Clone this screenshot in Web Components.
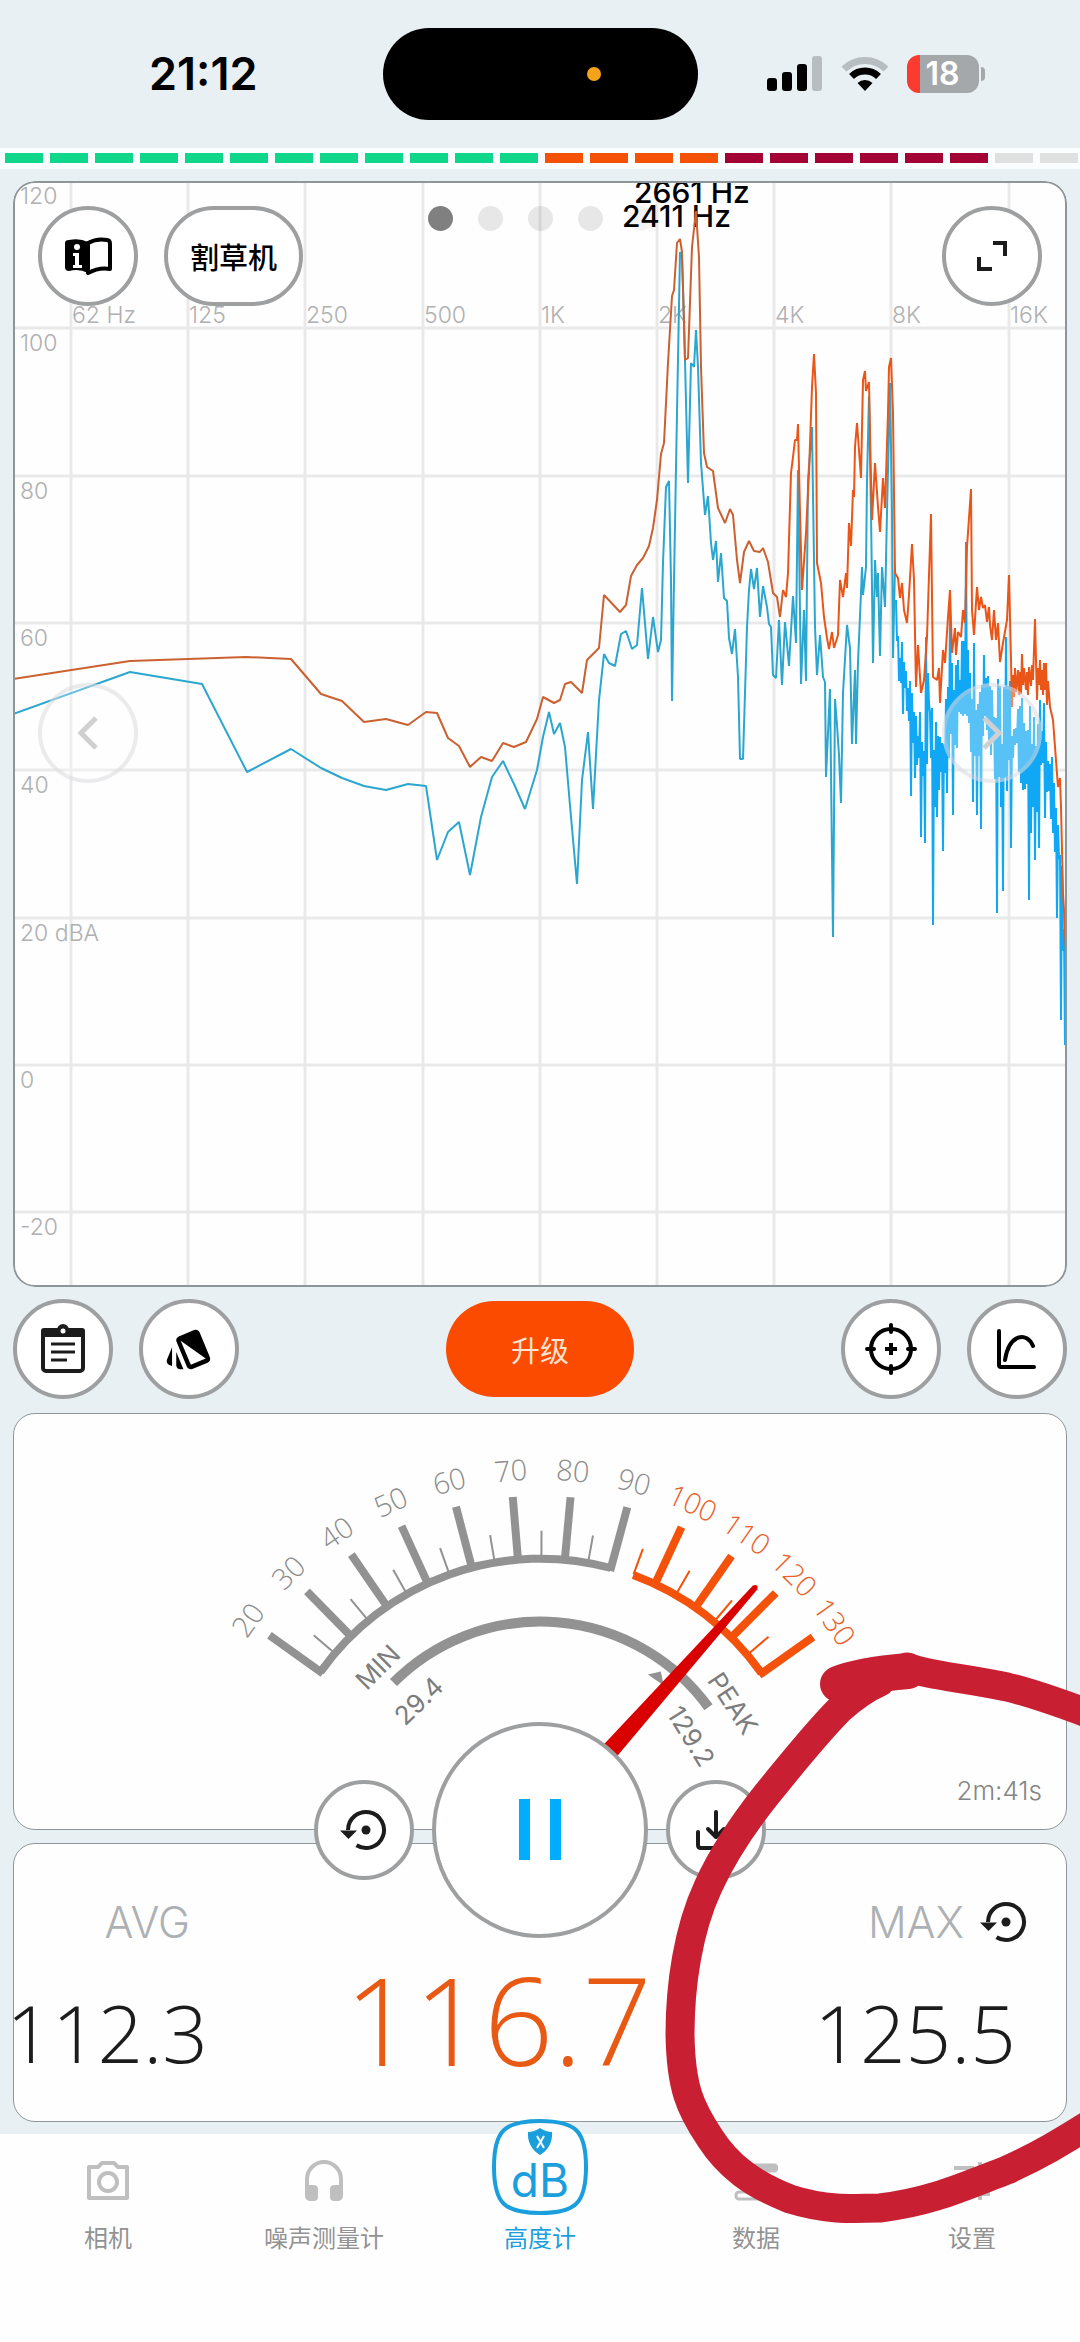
<!DOCTYPE html>
<html lang="zh-CN">
<head>
<meta charset="utf-8">
<meta name="viewport" content="width=device-width, initial-scale=1">
<title>高度计</title>
<style>
  body {
    margin: 0;
    background: #e9f0f3;
    font-family: Inter, "Noto Sans CJK SC", sans-serif;
    color: #000;
  }
</style>
</head>
<body>
<meter-app></meter-app>
<script>
"use strict";

function attach(host, html) {
    const template = document.createElement("template");
    template.innerHTML = html;
    host.attachShadow({ mode: "open" });
    host.shadowRoot.appendChild(template.content.cloneNode(true));
}

const RESET_ICON = `
  <svg width="48" height="44" viewBox="0 0 48 44" fill="none" stroke="#1c1c1c" stroke-width="4" aria-hidden="true">
    <path d="M8 22 A18 18 0 1 1 16.500 37.300" />
    <path d="M0 22.500H17L8.500 31Z" fill="#1c1c1c" stroke="none" />
    <circle cx="26" cy="22" r="4.500" fill="#1c1c1c" stroke="none" />
  </svg>`;

class StatusBar extends HTMLElement {
    constructor() {
        super();
        attach(this, `
      <style>
      :host {
        display: grid;
        grid-template-columns: 1fr 315px 1fr;
        align-items: center;
        height: 148px;
      }
      .time {
        padding-left: 24px;
        text-align: center;
        font-size: 45px;
        font-weight: 600;
        line-height: 48px;
      }
      .island {
        box-sizing: border-box;
        height: 92px;
        padding-right: 97px;
        border-radius: 46px;
        background: #000;
        display: flex;
        align-items: center;
        justify-content: flex-end;
      }
      .island i {
        width: 14px;
        height: 14px;
        border-radius: 50%;
        background: #f7a21b;
      }
      .icons {
        display: flex;
        align-items: center;
        gap: 18px;
        padding-left: 69px;
      }
      .battery {
        display: flex;
        align-items: center;
        gap: 2px;
      }
      .level {
        width: 72px;
        height: 38px;
        border-radius: 12px;
        background: linear-gradient(90deg, #fb3b2f 13px, #a4a8ab 13px);
        color: #fff;
        font-size: 32px;
        font-weight: 600;
        line-height: 38px;
        text-align: center;
      }
      .nub {
        width: 4px;
        height: 14px;
        border-radius: 0 4px 4px 0;
        background: #a4a8ab;
      }
      </style>
      <div class="time">21:12</div>
      <div class="island"><i></i></div>
      <div class="icons">
        <svg width="56" height="36" viewBox="0 0 56 36" aria-hidden="true">
          <rect x="0" y="22" width="10" height="13" rx="3" />
          <rect x="15" y="16" width="10" height="19" rx="3" />
          <rect x="30" y="8" width="10" height="27" rx="3" />
          <rect x="45" y="0" width="10" height="35" rx="3" fill="#b7bdc0" />
        </svg>
        <svg width="48" height="36" viewBox="0 0 48 36" fill="none" stroke-width="7" aria-hidden="true">
          <path d="M3 13 A30 30 0 0 1 45 13" stroke="#b7bdc0" />
          <path d="M10.500 20.500 A19.500 19.500 0 0 1 37.500 20.500" stroke="#000" />
          <path d="M24 35 L16.500 27 A11 11 0 0 1 31.500 27Z" fill="#000" />
        </svg>
        <div class="battery"><div class="level">18</div><div class="nub"></div></div>
      </div>`);
    }
}
customElements.define("status-bar", StatusBar);

class LevelStrip extends HTMLElement {
    constructor() {
        super();
        attach(this, `
      <style>
      :host {
        display: grid;
        grid-template-columns: repeat(24, 1fr);
        background: #fafdfd;
        padding: 5px 0 6px;
      }
      i {
        height: 10px;
        margin: 0 2px 0 5px;
        background: #dfe1e1;
      }
      .ok { background: #0ed68a; }
      .warn { background: #f55208; }
      .loud { background: #a30234; }
      </style>`);
        for (let n = 0; n < 24; n++) {
            const cell = document.createElement("i");
            cell.className = n < 12 ? "ok" : n < 16 ? "warn" : n < 22 ? "loud" : "";
            this.shadowRoot.appendChild(cell);
        }
    }
}
customElements.define("level-strip", LevelStrip);

class RoundButton extends HTMLElement {
    constructor() {
        super();
        attach(this, `
      <style>
      :host {
        display: block;
        flex: none;
        --size: 100px;
      }
      button {
        box-sizing: border-box;
        display: flex;
        align-items: center;
        justify-content: center;
        min-width: var(--size);
        height: var(--size);
        padding: 0;
        border: 4px solid #9d9fa0;
        border-radius: 108px;
        background: #fff;
        color: #000;
        font: inherit;
      }
      :host([large]) { --size: 216px; }
      :host([text]) button { padding: 0 22px; font-size: 29px; font-weight: 500; }
      :host([faint]) button { background: rgba(255, 255, 255, 0.3); border-color: rgba(205, 205, 212, 0.4); }
      :host([accent]) { --size: 96px; }
      :host([accent]) button {
        padding: 0 65px;
        border: 0;
        background: #fa4b00;
        color: #fde3d0;
        font-size: 29px;
      }
      </style>
      <button type="button"><slot></slot></button>`);
    }
    connectedCallback() {
        if (this.title) {
            this.shadowRoot.querySelector("button").setAttribute("aria-label", this.title);
        }
    }
}
customElements.define("round-button", RoundButton);

// Traces are kept in plot units: x 13..1067, y 181..1287
const peakTrace = [
    13, 679, 130, 661, 246, 657, 291, 659, 321, 694, 342, 701, 364, 722, 386, 719, 408, 725, 426, 712,
    437, 713, 448, 738, 459, 746, 470, 767, 481, 757, 492, 761, 503, 743, 514, 747, 526, 742, 537, 719,
    543, 697, 554, 703, 560, 700, 565, 684, 571, 682, 582, 693, 587, 660, 599, 648, 604, 595, 620, 612,
    626, 605, 631, 576, 637, 565, 643, 558, 649, 546, 653, 528, 657, 500, 661, 454, 664, 443, 668, 363,
    672, 296, 674, 290, 677, 243, 680, 239, 682, 252, 685, 360, 688, 358, 692, 247, 696, 211, 699, 257,
    701, 367, 704, 453, 707, 467, 713, 471, 718, 508, 725, 523, 730, 509, 733, 515, 737, 560, 740, 583,
    744, 552, 749, 541, 754, 551, 760, 552, 763, 548, 768, 562, 773, 593, 777, 597, 780, 617, 783, 590
];
const peakTraceHigh = [
    783, 590, 786, 597, 788, 573, 791, 473, 793, 457, 795, 440, 797, 440, 798, 424, 800, 513, 802, 590, 806, 533,
    809, 473, 812, 387, 814, 354, 816, 393, 817, 563, 821, 583, 824, 617, 827, 638, 829, 649, 832, 632,
    834, 648, 838, 635, 840, 580, 843, 597, 846, 573, 847, 588, 849, 523, 851, 546, 853, 490, 854, 497,
    855, 447, 857, 423, 861, 478, 863, 380, 865, 371, 866, 391, 869, 382, 871, 480, 872, 520, 875, 463,
    878, 507, 880, 532, 883, 478, 885, 508, 888, 413, 889, 367, 891, 358, 893, 413, 895, 573, 898, 578,
    900, 598, 902, 583, 904, 610, 907, 623, 909, 595, 912, 544, 914, 580, 916, 687, 918, 645, 921, 693,
    924, 680, 927, 637, 931, 514, 933, 677, 937, 680, 939, 668, 940, 703, 943, 650, 945, 663, 948, 617,
    950, 590, 952, 653, 955, 628, 956, 655, 958, 632, 961, 637, 963, 610, 965, 623, 967, 547, 971, 489,
    972, 610, 974, 635, 977, 587, 979, 610, 981, 597, 983, 608, 985, 605, 987, 622, 989, 607, 990, 625,
    992, 640, 994, 610, 996, 640, 998, 623, 1000, 662, 1003, 643, 1007, 620, 1009, 575, 1011, 660, 1012, 707,
    1013, 675, 1014, 697, 1015, 668, 1016, 692, 1018, 670, 1019, 695, 1020, 672, 1021, 694, 1022, 654,
    1023, 685, 1024, 668, 1026, 690, 1027, 672, 1028, 695, 1029, 667, 1031, 686, 1032, 665, 1033, 680,
    1035, 619, 1036, 660, 1037, 700, 1038, 668, 1039, 685, 1040, 660, 1041, 690, 1042, 670, 1043, 695,
    1044, 663, 1045, 690, 1046, 663, 1047, 705, 1048, 681, 1050, 707, 1053, 720, 1055, 747, 1058, 787,
    1060, 778, 1061, 807, 1063, 893, 1064, 910, 1066, 953
];
const liveTrace = [
    13, 714, 130, 672, 202, 684, 247, 772, 291, 749, 321, 768, 342, 778, 364, 786, 386, 790, 408, 784,
    426, 786, 437, 860, 448, 832, 459, 822, 470, 875, 481, 817, 492, 777, 503, 761, 514, 784, 525, 809,
    537, 770, 543, 737, 549, 712, 554, 734, 560, 723, 565, 747, 571, 817, 577, 884, 582, 780, 588, 732,
    593, 809, 599, 700, 604, 654, 609, 663, 615, 666, 621, 634, 626, 631, 632, 649, 637, 645, 642, 588,
    648, 659, 653, 617, 658, 652, 661, 640, 663, 563, 666, 487, 669, 481, 671, 580, 672, 701, 674, 580,
    677, 413, 680, 252, 682, 258, 684, 320, 688, 483, 691, 363, 694, 367, 696, 330, 698, 367, 701, 463,
    705, 515, 708, 496, 711, 543, 713, 560, 716, 541, 718, 582, 721, 553, 724, 598, 727, 601, 729, 638,
    732, 654, 735, 629, 738, 677, 740, 759, 743, 759, 747, 627, 749, 590, 751, 569, 754, 589, 757, 568,
    760, 617, 763, 586, 767, 607, 769, 624, 771, 627, 773, 675, 776, 678, 779, 620, 782, 685, 785, 622,
    789, 666, 793, 596, 796, 643, 798, 470, 801, 684, 804, 610, 806, 681, 808, 480, 812, 427, 815, 627,
    817, 675, 820, 635, 823, 677, 825, 682, 826, 777, 830, 689, 833, 937, 835, 699, 837, 725, 839, 755,
    841, 803, 843, 693, 847, 625, 850, 648, 852, 744, 855, 670, 856, 744, 858, 662, 861, 593, 862, 567,
    863, 595, 866, 567, 867, 480, 869, 396, 871, 513, 873, 663, 875, 560, 877, 597, 878, 573, 880, 656,
    882, 567, 885, 607, 887, 513, 890, 383, 892, 513, 893, 658, 895, 567
];
// Above 8K the live trace is denser than one bin per pixel: x, upper edge, lower edge
const liveBand = [
    [896, 600, 670], [899, 643, 695], [903, 627, 705], [907, 657, 750], [911, 675, 770], [917, 687, 790],
    [922, 720, 815], [925, 723, 815], [928, 650, 740], [933, 700, 830], [939, 730, 800], [943, 715, 820],
    [947, 690, 800], [951, 620, 750], [954, 680, 790], [958, 645, 740], [965, 625, 730], [972, 643, 780],
    [978, 670, 790], [984, 655, 760], [990, 670, 770], [998, 675, 800], [1003, 680, 830], [1007, 650, 790],
    [1011, 680, 820], [1015, 705, 760], [1021, 695, 785], [1028, 690, 820], [1035, 697, 820], [1040, 700, 810],
    [1046, 703, 800], [1050, 735, 830], [1055, 765, 860], [1058, 795, 890], [1060, 830, 940], [1064, 900, 970]
];
const liveSpikes = {
    903: 714, 911: 796, 921: 837, 925: 843, 933: 925, 937: 817, 943: 851, 947: 793,
    953: 815, 972: 802, 977: 815, 981: 829, 997: 913, 1003: 891,
    1011: 848, 1021: 783, 1028: 900, 1031: 833, 1035: 860, 1039: 848, 1045: 818, 1057: 918, 1061: 1020, 1065: 1045
};
const livePeaks = { 927: 637, 951: 600, 967: 542, 974: 643, 984: 655, 1006: 637 };

function nearest(table, x) {
    return table[x] || table[x + 1];
}

function denseBand() {
    const out = [];
    let seed = 7;
    const random = () => {
        seed = (seed * 16807) % 2147483647;
        return seed / 2147483647;
    };
    let k = 0;
    for (let x = 896; x <= 1066; x += 2) {
        while (k < liveBand.length - 2 && liveBand[k + 1][0] < x) {
            k++;
        }
        const [x0, t0, b0] = liveBand[k];
        const [x1, t1, b1] = liveBand[k + 1];
        const f = Math.min(1, Math.max(0, (x - x0) / (x1 - x0)));
        const top = t0 + (t1 - t0) * f;
        const bottom = b0 + (b1 - b0) * f;
        const span = bottom - top;
        out.push(
            x, nearest(livePeaks, x) || Math.round(top + random() * 0.45 * span),
            x + 1, nearest(liveSpikes, x) || Math.round(bottom - random() * 0.45 * span)
        );
    }
    return out;
}

class SpectrumChart extends HTMLElement {
    constructor() {
        super();
        const columns = ["62 Hz", "125", "250", "500", "1K", "2K", "4K", "8K", "16K"];
        const rows = ["120", "100", "80", "60", "40", "20 dBA", "0", "-20"];
        let grid = "";
        let labels = "";
        columns.forEach((text, i) => {
            const x = 71 + Math.round(i * 117.2);
            grid += `<path d="M${x} 183V1286" />`;
            labels += `<text x="${x + 1}" y="323">${text}</text>`;
        });
        rows.forEach((text, i) => {
            const y = 181 + Math.round(i * 147.3);
            if (i > 0) {
                grid += `<path d="M15 ${y}H1066" />`;
            }
            labels += `<text x="20" y="${y + 23}">${text}</text>`;
        });
        attach(this, `
      <style>
      :host {
        display: grid;
        overflow: hidden;
        border-radius: 22px;
        background: #fefefe;
      }
      .plot, .controls { grid-area: 1 / 1; }
      .plot { display: block; width: 100%; }
      .labels { font-size: 23px; font-weight: 300; fill: #b0b0b2; }
      .marks { font-size: 30px; font-weight: 500; }
      .controls {
        z-index: 1;
        display: grid;
        grid-template-rows: 100px 100px;
        row-gap: 377px;
        padding: 25px;
      }
      .row { display: flex; justify-content: space-between; }
      .group { display: flex; gap: 26px; }
      .dots { display: flex; gap: 25px; }
      .dots i { width: 25px; height: 25px; border-radius: 50%; background: rgba(0, 0, 0, 0.09); }
      .dots i:first-child { background: #808080; }
      .dots i:last-child { background: rgba(0, 0, 0, 0.04); }
      .top { display: grid; grid-template-columns: 1fr auto 1fr; }
      .top > :last-child { justify-self: end; }
      </style>
      <svg class="plot" viewBox="13 181 1054 1106" role="img" aria-label="dBA / Hz">
        <g stroke="#e9e9e9" stroke-width="3">${grid}</g>
        <g class="labels">${labels}</g>
        <g class="marks"><text x="634" y="203">2661 Hz</text><text x="622" y="227">2411 Hz</text></g>
        <g fill="none" stroke-width="2" stroke-linejoin="bevel">
          <polyline stroke="#2ba6cf" points="${liveTrace.join(" ")}" />
          <polyline stroke="#10a8f4" points="${denseBand().join(" ")}" />
          <polyline stroke="#cb6030" points="${peakTrace.join(" ")}" />
          <polyline stroke="#ea5518" points="${peakTraceHigh.join(" ")}" />
        </g>
        <rect x="14" y="182" width="1052" height="1104" rx="21" fill="none" stroke="#8f9699" stroke-width="2" />
      </svg>
      <div class="controls">
        <div class="top">
          <div class="group">
            <round-button title="info">
              <svg width="48" height="40" viewBox="0 0 48 40" aria-hidden="true">
                <path d="M1 7Q1 4 5 4Q16 2 24 6V37Q15 32 5 35Q1 35 1 31Z" />
                <path d="M24 7Q33 2 43 4Q46 4 46 8V33Q35 31 24 37Z" fill="none" stroke="#000" stroke-width="4" stroke-linejoin="round" />
                <circle cx="13" cy="11" r="3" fill="#fff" />
                <path d="M9 17H15V29H18V32H9V29H11V20H9Z" fill="#fff" />
              </svg>
            </round-button>
            <round-button text>割草机</round-button>
          </div>
          <div class="dots"><i></i><i></i><i></i><i></i><i></i></div>
          <round-button title="expand">
            <svg width="32" height="32" viewBox="0 0 32 32" fill="none" stroke="#1c1c1c" stroke-width="4" aria-hidden="true">
              <path d="M17 3H29V16M3 17V29H16" />
            </svg>
          </round-button>
        </div>
        <div class="row">
          <round-button faint title="previous">
            <svg width="24" height="36" viewBox="0 0 24 36" fill="none" stroke="#d0d0d2" stroke-width="5" aria-hidden="true"><path d="M20 3L5 18L20 33" /></svg>
          </round-button>
          <round-button faint title="next">
            <svg width="24" height="36" viewBox="0 0 24 36" fill="none" stroke="#d0d0d2" stroke-width="5" aria-hidden="true"><path d="M4 3L19 18L4 33" /></svg>
          </round-button>
        </div>
      </div>`);
    }
}
customElements.define("spectrum-chart", SpectrumChart);

class ToolBar extends HTMLElement {
    constructor() {
        super();
        attach(this, `
      <style>
      :host {
        display: grid;
        grid-template-columns: 1fr auto 1fr;
        align-items: center;
        padding: 12px 0 14px;
      }
      div { display: flex; gap: 26px; }
      .end { justify-content: flex-end; }
      </style>
      <div>
        <round-button title="notes">
          <svg width="46" height="52" viewBox="0 0 46 52" fill="none" stroke="#1c1c1c" stroke-width="4" aria-hidden="true">
            <rect x="3" y="9" width="40" height="39" rx="3" />
            <path d="M1 8Q1 5 4 5H42Q45 5 45 8V14H1Z" fill="#1c1c1c" stroke="none" />
            <circle cx="23" cy="7" r="6" fill="#1c1c1c" stroke="none" />
            <circle cx="23" cy="8" r="2.500" fill="#fff" stroke="none" />
            <path d="M11 21H35M11 29H35M11 37H27" stroke-width="3" />
          </svg>
        </round-button>
        <round-button title="palette">
          <svg width="50" height="50" viewBox="0 0 24 24" aria-hidden="true">
            <path d="M2.530 19.650l1.340.560v-9.030l-2.430 5.860c-.410 1.020.080 2.190 1.090 2.610zM22.030 15.950L17.070 3.980c-.310-.750-1.040-1.210-1.810-1.230-.260 0-.530.040-.790.150L7.100 5.950c-.750.310-1.210 1.030-1.230 1.800-.010.270.040.540.150.800l4.960 11.970c.310.760 1.050 1.220 1.830 1.230.260 0 .520-.050.770-.150l7.360-3.050c1.020-.420 1.510-1.590 1.090-2.600zM5.880 19.750c0 1.100.9 2 2 2h1.450l-3.450-8.340v6.340z" />
            <path d="M8 8L20 16.500L12.900 19.500Z" fill="#fff" />
          </svg>
        </round-button>
      </div>
      <round-button accent>升级</round-button>
      <div class="end">
        <round-button title="target">
          <svg width="54" height="54" viewBox="0 0 54 54" fill="none" stroke="#000" stroke-width="4" stroke-linecap="round" aria-hidden="true">
            <circle cx="27" cy="27" r="20" />
            <path d="M27 3V10M27 44V51M3 27H10M44 27H51" />
            <path d="M27 21V33M21 27H33" stroke-linecap="butt" />
          </svg>
        </round-button>
        <round-button title="curve">
          <svg width="42" height="42" viewBox="0 0 42 42" fill="none" stroke="#000" stroke-width="4" stroke-linecap="round" stroke-linejoin="round" aria-hidden="true">
            <path d="M3 3V37Q3 39 5 39H38M9 32C13 6 31 3 37 18" />
          </svg>
        </round-button>
      </div>`);
    }
}
customElements.define("tool-bar", ToolBar);

class SoundGauge extends HTMLElement {
    constructor() {
        super();
        const degrees = (db) => (db - 74.8) * 0.993;
        const at = (db, r) => {
            const a = degrees(db) * Math.PI / 180;
            return `${(527.5 + r * Math.sin(a)).toFixed(1)} ${(416 - r * Math.cos(a)).toFixed(1)}`;
        };
        const arc = (from, to, r) => `M${at(from, r)}A${r} ${r} 0 0 1 ${at(to, r)}`;
        const turned = (db, r, text, cls) =>
            `<text class="${cls}" transform="translate(${at(db, r)}) rotate(${degrees(db).toFixed(1)})">${text}</text>`;
        let ticks = "";
        for (let db = 20; db <= 130; db += 5) {
            const major = db % 10 === 0;
            const color = db > 90 ? "#f4510b" : "#929292";
            ticks += `<path d="M${at(db, major ? 268 : 272)}L${at(db, major ? 334 : 299)}" stroke="${color}" stroke-width="${major ? 8 : 2}" />`;
            if (major) {
                ticks += turned(db, 350, db, db > 90 ? "hot" : "cold");
            }
        }
        attach(this, `
      <style>
      :host {
        display: grid;
        box-sizing: border-box;
        border: 1px solid #8f9699;
        border-radius: 22px;
        background: #fefefe;
      }
      svg { grid-area: 1 / 1; display: block; width: 100%; }
      time {
        grid-area: 1 / 1;
        place-self: end;
        padding: 0 24px 22px 0;
        font-size: 26px;
        line-height: 32px;
        font-weight: 300;
        color: #858585;
      }
      text { text-anchor: middle; font-weight: 300; }
      .cold, .hot { font-family: "Open Sans", sans-serif; font-size: 29px; fill: #8c8c8c; }
      .hot { fill: #e8622a; }
      .range { font-size: 26px; fill: #7d7d7d; font-weight: 400; }
      </style>
      <svg viewBox="0 0 1054 416" role="img" aria-label="116.7 dB">
        ${ticks}
        <g fill="none" stroke-width="8">
          <path d="${arc(20, 90, 271)}" stroke="#929292" />
          <path d="${arc(95, 130, 271)}" stroke="#f4510b" />
          <path d="${arc(29.4, 129.2, 208)}" stroke="#929292" stroke-width="10" />
        </g>
        <path d="M635 261L648 258L651 272Z" fill="#929292" />
        ${turned(29.4, 221, "MIN", "range")}
        ${turned(31, 168, "29.4", "range")}
        ${turned(132, 221, "PEAK", "range")}
        ${turned(133.500, 168, "129.2", "range")}
        <path d="M-9 -100L-3 -324Q0 -329 3 -324L9 -100Z" fill="#d90000" transform="translate(527.5 416) rotate(41.600)" />
      </svg>
      <time>2m:41s</time>`);
    }
}
customElements.define("sound-gauge", SoundGauge);

class PlayControls extends HTMLElement {
    constructor() {
        super();
        attach(this, `
      <style>
      /* No height of its own: the buttons straddle the seam of the two cards */
      :host {
        position: relative;
        z-index: 1;
        display: flex;
        align-items: center;
        justify-content: center;
        gap: 18px;
        height: 0;
        margin-bottom: 13px;
      }
      </style>
      <round-button title="reset">${RESET_ICON}</round-button>
      <round-button large title="pause">
        <svg width="42" height="62" viewBox="0 0 42 62" fill="#00aeff" aria-hidden="true">
          <rect x="0" y="0" width="11" height="61" /><rect x="31" y="0" width="11" height="61" />
        </svg>
      </round-button>
      <round-button title="save">
        <svg width="42" height="42" viewBox="0 0 42 42" fill="none" stroke="#1c1c1c" stroke-width="4" stroke-linecap="round" stroke-linejoin="round" aria-hidden="true">
          <path d="M21 3V27M13 20L21 28L29 20M3 23V36Q3 39 6 39H36Q39 39 39 36V23" />
        </svg>
      </round-button>`);
    }
}
customElements.define("play-controls", PlayControls);

class SoundStats extends HTMLElement {
    constructor() {
        super();
        attach(this, `
      <style>
      :host {
        display: grid;
        grid-template-columns: 194px 1fr 242px;
        box-sizing: border-box;
        height: 279px;
        border: 1px solid #8f9699;
        border-radius: 22px;
        background: #fefefe;
      }
      section {
        display: flex;
        flex-direction: column;
        align-items: flex-end;
        padding-top: 52px;
      }
      .label {
        display: flex;
        align-items: center;
        gap: 16px;
        height: 52px;
        padding-right: 18px;
        font-size: 43px;
        font-weight: 300;
        color: #adb1b4;
      }
      .value {
        font-family: "Open Sans", sans-serif;
        font-size: 80px;
        line-height: 96px;
        margin-top: 36px;
        font-weight: 300;
        color: #1c1c1c;
      }
      .now {
        justify-content: flex-end;
        padding: 0 172px 30px 0;
      }
      .now .value { font-size: 122px; line-height: 144px; color: #e85a14; }
      .max { padding-right: 50px; }
      .max .label { padding: 0; margin-right: -12px; }
      </style>
      <section><span class="label">AVG</span><span class="value">112.3</span></section>
      <section class="now"><span class="value">116.7</span></section>
      <section class="max"><span class="label">MAX ${RESET_ICON}</span><span class="value">125.5</span></section>`);
    }
}
customElements.define("sound-stats", SoundStats);

class TabLink extends HTMLElement {
    constructor() {
        super();
        attach(this, `
      <style>
      :host { display: block; color: #929292; }
      :host([active]) { color: #1b9fdc; }
      a {
        display: grid;
        grid-template-rows: 96px 30px;
        row-gap: 9px;
        justify-items: center;
        align-items: center;
        margin-top: -15px;
        color: inherit;
        text-decoration: none;
        font-size: 24px;
        line-height: 30px;
      }
      </style>
      <a href="#"><slot name="icon"></slot><span><slot></slot></span></a>`);
    }
}
customElements.define("tab-link", TabLink);

class TabBar extends HTMLElement {
    constructor() {
        super();
        attach(this, `
      <style>
      :host {
        display: grid;
        grid-template-columns: repeat(5, 1fr);
        margin-top: 12px;
        padding-bottom: 90px;
        background: #fefefe;
      }
      .plain { margin-top: 28px; }
      .db { font-size: 46px; font-weight: 400; }
      </style>
      <tab-link>
        <svg slot="icon" class="plain" width="44" height="42" viewBox="0 0 44 42" fill="none" stroke="#bfbfbf" stroke-width="4" stroke-linejoin="round" aria-hidden="true">
          <path d="M3 7H12L16 3H28L32 7H41V38H3Z" /><circle cx="22" cy="22" r="9" />
        </svg>相机
      </tab-link>
      <tab-link>
        <svg slot="icon" class="plain" width="40" height="42" viewBox="0 0 40 42" fill="none" stroke="#bfbfbf" stroke-width="4" aria-hidden="true">
          <path d="M3 34V19A17 17 0 0 1 37 19V34" />
          <path d="M1 25H9Q14 25 14 29V37Q14 41 10 41H7Q1 41 1 35ZM39 25H31Q26 25 26 29V37Q26 41 30 41H33Q39 41 39 35Z" fill="#bfbfbf" stroke="none" />
        </svg>噪声测量计
      </tab-link>
      <tab-link active>
        <svg slot="icon" width="96" height="96" viewBox="0 0 96 96" aria-hidden="true">
          <path d="M48 2C84 2 94 12 94 48S84 94 48 94S2 84 2 48S12 2 48 2Z" fill="#fefefe" stroke="#1b9fdc" stroke-width="4" />
          <path d="M48 9Q54 13 60 13Q61 28 48 36Q35 28 36 13Q42 13 48 9Z" fill="#1b9fdc" />
          <path d="M45 17L52 29M52 17L45 29" stroke="#fff" stroke-width="2" />
          <text class="db" x="48" y="78" text-anchor="middle" fill="#1b9fdc">dB</text>
        </svg>高度计
      </tab-link>
      <tab-link>
        <svg slot="icon" class="plain" width="44" height="42" viewBox="0 0 44 42" fill="none" stroke="#bfbfbf" stroke-width="3" aria-hidden="true">
          <rect x="2" y="5" width="41" height="6" rx="3" fill="#bfbfbf" /><rect x="2" y="18" width="41" height="7" rx="3" /><rect x="2" y="32" width="41" height="7" rx="3" />
        </svg>数据
      </tab-link>
      <tab-link>
        <svg slot="icon" class="plain" width="40" height="42" viewBox="0 0 40 42" fill="none" stroke="#bfbfbf" stroke-width="4" aria-hidden="true">
          <path d="M2 8H22M28 2V14M28 8H38M2 21H10M15 15V27M15 21H38M2 34H22M28 28V40M28 34H38" />
        </svg>设置
      </tab-link>`);
    }
}
customElements.define("tab-bar", TabBar);

class InkMark extends HTMLElement {
    constructor() {
        super();
        attach(this, `
      <style>
      :host {
        position: absolute;
        z-index: 2;
        right: 0;
        top: 1640px;
        width: 420px;
        height: 600px;
        overflow: hidden;
        pointer-events: none;
      }
      </style>
      <svg width="420" height="600" viewBox="660 1640 420 600" fill="none" stroke="#c81f32" stroke-width="29" stroke-linecap="round" stroke-linejoin="round" aria-hidden="true">
        <path d="M838 1684C855 1677 885 1673 908 1671" stroke-width="36" />
        <path d="M907 1667C930 1676 960 1677 1007 1687C1040 1695 1062 1704 1095 1716" />
        <path d="M845 1690L880 1682C862 1690 850 1700 840 1709C815 1734 790 1766 767 1794C740 1828 722 1856 708 1887C688 1930 680 1985 680 2035C681 2088 690 2108 710 2138C728 2166 752 2184 790 2199C825 2210 850 2209 880 2208C930 2202 960 2188 1007 2170C1040 2155 1060 2143 1095 2121" />
      </svg>`);
    }
}
customElements.define("ink-mark", InkMark);

class MeterApp extends HTMLElement {
    constructor() {
        super();
        attach(this, `
      <style>
      :host { display: block; position: relative; overflow: hidden; }
      main { padding: 12px 13px 0; }
      </style>
      <status-bar></status-bar>
      <level-strip></level-strip>
      <main>
        <spectrum-chart></spectrum-chart>
        <tool-bar></tool-bar>
        <sound-gauge></sound-gauge>
        <play-controls></play-controls>
        <sound-stats></sound-stats>
      </main>
      <tab-bar></tab-bar>
      <ink-mark></ink-mark>`);
    }
}
customElements.define("meter-app", MeterApp);
</script>
</body>
</html>
